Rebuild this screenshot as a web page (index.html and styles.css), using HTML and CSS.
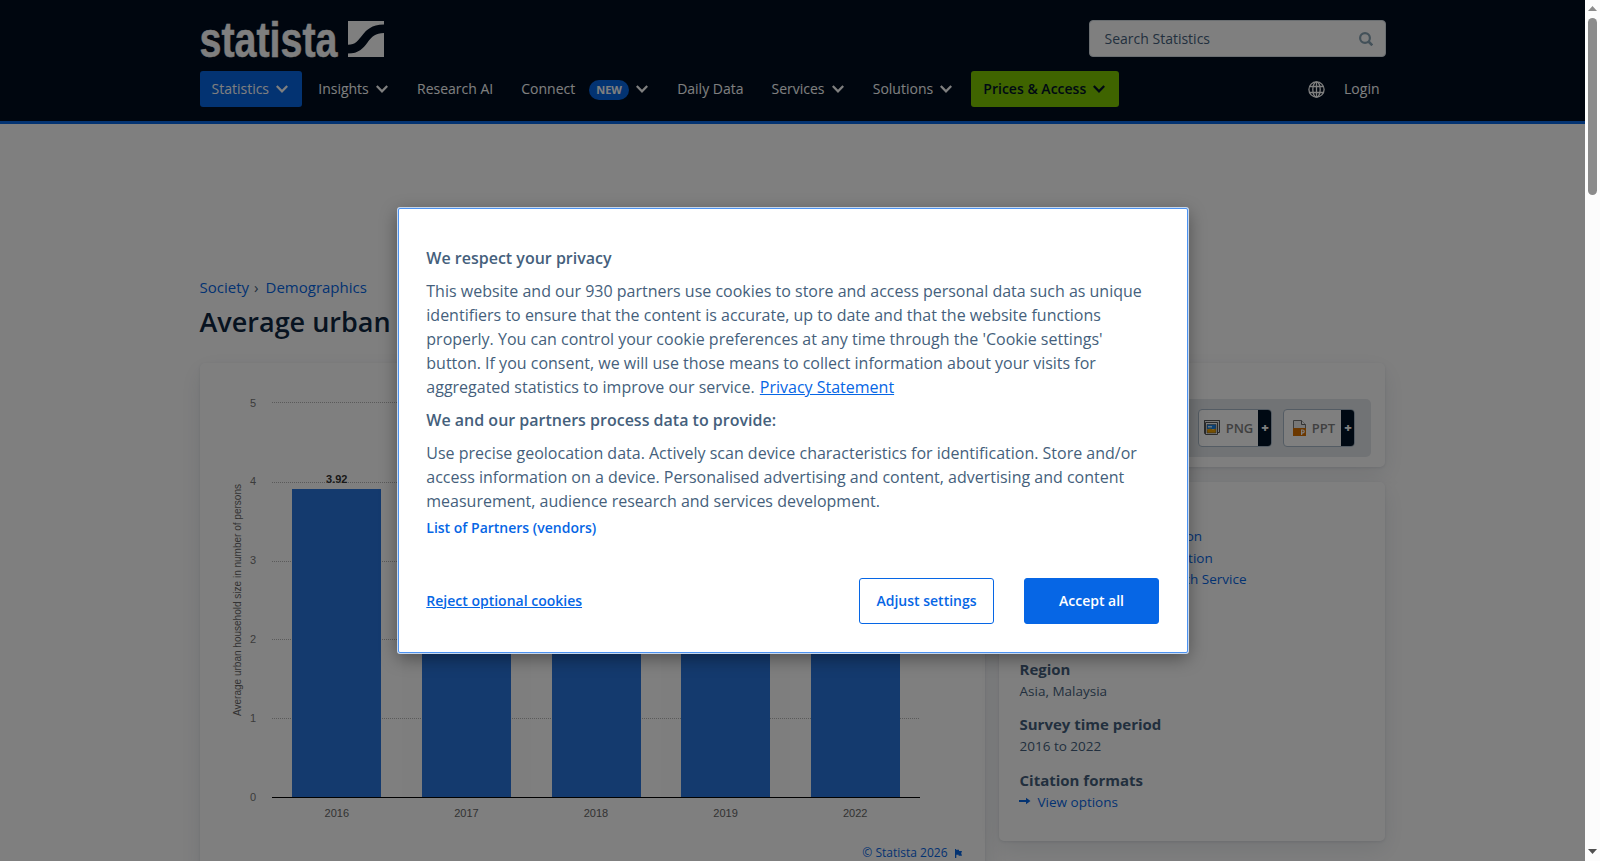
FILE: index.html
```html
<!DOCTYPE html>
<html lang="en">
<head>
<meta charset="utf-8">
<title>Average urban household size in Malaysia | Statista</title>
<link rel="stylesheet" href="styles.css">
</head>
<body>
<svg class="defs" width="0" height="0" aria-hidden="true">
  <symbol id="chev" viewBox="0 0 12 8"><path d="M.8.900 6 6.300 11.200.900" fill="none" stroke="currentColor" stroke-width="2.200"/></symbol>
</svg>
<div class="page">
  <header class="header">
    <div class="header-top">
      <svg class="logo" width="186" height="40" viewBox="0 0 186 40">
        <text class="logo-text" x="-.5" y="36.500" textLength="138" lengthAdjust="spacingAndGlyphs">statista</text>
        <path d="M148 1h36v3.500c-13 .5-17 5-21.500 10.500s-7 9.800-14.500 9.800z" fill="#fff"/>
        <path d="M184 13v24h-36v-3.500c11 0 15-5 19.500-11s8-9.500 16.500-9.500z" fill="#fff"/>
      </svg>
      <div class="search"><span>Search Statistics</span>
        <svg width="14" height="14" viewBox="0 0 14 14"><circle cx="6" cy="6" r="4.900" fill="none" stroke="currentColor" stroke-width="2.200"/><path d="m9.500 9.500 3.800 3.800" stroke="currentColor" stroke-width="2.600"/></svg>
      </div>
    </div>
    <nav class="nav">
      <a class="item active">Statistics<svg class="chev"><use href="#chev"/></svg></a>
      <a class="item">Insights<svg class="chev"><use href="#chev"/></svg></a>
      <a class="item">Research AI</a>
      <a class="item">Connect<span class="pill">NEW</span><svg class="chev"><use href="#chev"/></svg></a>
      <a class="item">Daily Data</a>
      <a class="item">Services<svg class="chev"><use href="#chev"/></svg></a>
      <a class="item">Solutions<svg class="chev"><use href="#chev"/></svg></a>
      <a class="item prices">Prices &amp; Access<svg class="chev"><use href="#chev"/></svg></a>
      <span class="account">
        <svg width="17" height="17" viewBox="0 0 17 17" fill="none" stroke="currentColor" stroke-width="1.300"><circle cx="8.500" cy="8.500" r="7.600"/><ellipse cx="8.500" cy="8.500" rx="3.700" ry="7.600"/><path d="M8.500 1v15M1.800 5.500h13.400M1.800 11.500h13.400"/></svg>
        <a>Login</a>
      </span>
    </nav>
  </header>
  <main class="main">
    <div class="crumbs"><a>Society</a><span>›</span><a>Demographics</a></div>
    <h1>Average urban household size in Malaysia from 2016 to 2022</h1>
    <div class="columns">
      <section class="card chart-card">
        <svg class="chart" width="785" height="470" viewBox="200 363 785 470">
          <g fill="#fcfcfc"><path d="M401.600 403h129.600v394H401.600zM660.800 403h129.600v394H660.800z"/></g>
          <g class="grid"><path d="M272 402.500h648M272 482.500h648M272 561.500h648M272 639.500h648M272 718.500h648"/></g>
          <g fill="#2875dd"><path d="M292 489h89v308h-89zM422 494h89v303h-89zM552 496h89v301h-89zM681 498h89v299h-89zM811 500h89v297h-89z"/></g>
          <path d="M272 797.500h648" stroke="#000"/>
          <g class="ylab"><text x="256" y="407">5</text><text x="256" y="485">4</text><text x="256" y="564">3</text><text x="256" y="643">2</text><text x="256" y="722">1</text><text x="256" y="801">0</text></g>
          <g class="xlab"><text x="336.800" y="817">2016</text><text x="466.400" y="817">2017</text><text x="596" y="817">2018</text><text x="725.600" y="817">2019</text><text x="855.200" y="817">2022</text></g>
          <text class="val" x="336.800" y="483">3.92</text>
          <text class="ytitle" transform="translate(241 600) rotate(-90)" textLength="232">Average urban household size in number of persons</text>
        </svg>
        <div class="copyright">© Statista 2026<svg width="8" height="9" viewBox="0 0 8 9"><path d="M0 0h1v.8h3V2h3L6.200 4.200 7 6.800H3.600v-1H1.300V9H0z" fill="currentColor"/></svg></div>
      </section>
      <aside class="side">
        <section class="card downloads">
          <div class="download-bar">
            <span class="dl doc"><span class="dl-main">PDF</span><b>+</b></span>
            <span class="dl doc"><span class="dl-main">XLS</span><b>+</b></span>
            <span class="dl png"><span class="dl-main">
              <svg width="16" height="16" viewBox="0 0 16 16"><path d="M15.500 11.500V.500H.5v13h1.500" fill="#eee" stroke="#555"/><path d="M.5.500h15v12H.5z" fill="#eee" stroke="#555"/><path d="M1.500 2.500h12v12h-12z" fill="#fff" stroke="#555"/><path d="M3 4.500h9V9H3z" fill="#1683e8"/><path d="M4 6h4v1.500H4z" fill="#cdeaff"/><path d="M3 9.500 6 8.500l3 1 3-1V13H3z" fill="#efa100"/><path d="M3 4.500h9V13H3z" fill="none" stroke="#555" stroke-width=".600"/></svg>PNG</span><b>+</b></span>
            <span class="dl ppt"><span class="dl-main">
              <svg width="13" height="16" viewBox="0 0 13 16"><path d="M.5.500h8l4 4v8H.5z" fill="#eee" stroke="#777"/><path d="M8.500.500v4h4" fill="#fff" stroke="#666"/><path d="M0 8h13v8H0z" fill="#d97000"/><path d="M8.600 15v-5h1.200a1.300 1.300 0 0 1 0 2.800H8.600" fill="none" stroke="#fff" stroke-width="1.200"/></svg>PPT</span><b>+</b></span>
          </div>
        </section>
        <section class="card details">
          <h2>Source</h2>
          <a class="src">Show sources information</a>
          <a class="src">Show publisher information</a>
          <a class="src">Use Ask Statista Research Service</a>
          <h2 class="release">Release date</h2><p>July 2023</p>
          <h2>Region</h2><p>Asia, Malaysia</p>
          <h2>Survey time period</h2><p class="period">2016 to 2022</p>
          <h2>Citation formats</h2>
          <a class="cite"><svg width="12" height="8" viewBox="0 0 12 8"><path d="M0 3h7V.7L11.500 4 7 7.300V5H0z" fill="currentColor"/></svg>View options</a>
        </section>
      </aside>
    </div>
  </main>
  <div class="overlay">
    <div class="modal">
      <h3>We respect your privacy</h3>
      <p>This website and our 930 partners use cookies to store and access personal data such as unique identifiers to ensure that the content is accurate, up to date and that the website functions properly. You can control your cookie preferences at any time through the 'Cookie settings' button. If you consent, we will use those means to collect information about your visits for aggregated statistics to improve our service. <a class="privacy">Privacy Statement</a></p>
      <h3>We and our partners process data to provide:</h3>
      <p>Use precise geolocation data. Actively scan device characteristics for identification. Store and/or access information on a device. Personalised advertising and content, advertising and content measurement, audience research and services development.</p>
      <a class="vendors">List of Partners (vendors)</a>
      <div class="actions">
        <a class="reject">Reject optional cookies</a>
        <button class="btn">Adjust settings</button>
        <button class="btn primary">Accept all</button>
      </div>
    </div>
  </div>
</div>
<div class="scrollbar">
  <svg width="9" height="5" viewBox="0 0 9 5"><path d="M0 5 4.500 0 9 5z" fill="#8b8b8b"/></svg>
  <div class="thumb"></div>
  <svg width="9" height="5" viewBox="0 0 9 5"><path d="M0 0h9L4.500 5z" fill="#505050"/></svg>
</div>
</body>
</html>
```
FILE: styles.css
```css
* { box-sizing: border-box; }
body {
  margin: 0;
  display: flex;
  height: 861px;
  overflow: hidden;
  background: #fff;
  font-family: "Open Sans", "Noto Sans", sans-serif;
  color: #455f7c;
}
.defs { position: absolute; }
h1, h2, h3, p { margin: 0; }
.page { position: relative; width: 1585px; height: 861px; overflow: hidden; }

/* Header */
.header { height: 124px; background: #000d1f; border-bottom: 3px solid #0666e5; padding: 20px 199.500px 0; }
.header-top { display: flex; justify-content: space-between; height: 51px; }
.logo { overflow: visible; }
.logo-text { font: bold 50px "Liberation Sans", Arial, sans-serif; fill: #fff; stroke: #fff; stroke-width: .5px; }
.search {
  display: flex; align-items: center; justify-content: space-between;
  width: 297px; height: 37px; padding: 0 12px 0 15px;
  background: #fff; border: 1px solid #d5dce3; border-radius: 4px;
  font-size: 14px; color: #455f7c;
}
.search svg { color: #87a2b3; }
.nav { display: flex; gap: 4px; height: 36px; color: #fff; font-size: 14px; }
.item { display: flex; align-items: center; padding: 0 12px 2px; border-radius: 3px; white-space: nowrap; }
.item.active { background: #0666e5; padding-right: 13px; }
.item.prices { background: #7fc800; color: #001327; font-weight: 600; margin-left: 2px; padding-right: 13px; }
.chev { width: 12px; height: 8px; margin: 2px 1.200px 0 7px; }
.pill {
  display: flex; align-items: center; height: 20px; padding: 0 7px; margin: 3px 0 0 14px;
  background: #0666e5; border-radius: 10px; font-size: 11px; font-weight: 700;
}
.account { display: flex; align-items: center; gap: 19px; margin-left: auto; padding: 0 6px 2px 0; }
.account svg { margin-top: 2px; }

/* Content */
.main { padding: 150px 199.500px 0; }
.crumbs { display: flex; height: 25px; align-items: center; font-size: 15px; }
.crumbs span { margin: 0 7px 0 5px; }
.crumbs a, .src, .cite { color: #0666e5; }
h1 { margin-top: 4px; height: 60px; font-size: 27px; line-height: 38px; font-weight: 600; color: #0f2741; white-space: nowrap; }
.columns { display: flex; gap: 14px; }
.card { background: #fff; border-radius: 5px; box-shadow: 0 1px 3px rgba(15, 39, 65, .1), 0 8px 24px rgba(15, 39, 65, .1); }
.chart-card { width: 785px; height: 510px; }
.chart { display: block; font-family: "Liberation Sans", Arial, sans-serif; font-size: 11px; }
.grid path { stroke: #b4b4b4; stroke-dasharray: 1 1; }
.ylab { text-anchor: end; fill: #777; }
.xlab { text-anchor: middle; fill: #666; }
.val { text-anchor: middle; font-weight: bold; fill: #333; }
.ytitle { text-anchor: middle; font-size: 10px; fill: #666; }
.copyright { display: flex; justify-content: flex-end; align-items: center; gap: 7px; margin: 11px 22px 0 0; font-size: 12px; line-height: 18px; color: #0666e5; }
.side { width: 386px; }
.downloads { height: 104px; padding: 36px 14px 0; }
.download-bar { display: flex; justify-content: flex-end; height: 58px; padding: 10px 16px; background: #e3e7eb; border-radius: 5px; }
.dl { display: flex; flex: none; width: 74px; height: 38px; margin-left: 11px; border: 1px solid #a8b8c8; border-radius: 4px; overflow: hidden; font-size: 13px; font-weight: 600; color: #808080; background: #fff; }
.dl.ppt { width: 72px; }
.dl.doc { width: 66px; }
.dl-main { flex: 1; display: flex; align-items: center; justify-content: center; gap: 6px; }
.png .dl-main { padding-left: 1px; }
.ppt .dl-main { padding-left: 4px; }
.dl b { display: flex; align-items: center; justify-content: center; width: 13px; padding: 0 0 2px 2px; background: #001327; color: #fff; }
.details { height: 359px; margin-top: 15px; padding: 24px 21px 0; font-size: 13.500px; }
.details h2 { font-size: 15px; line-height: 20px; font-weight: 700; }
.details p { line-height: 20px; margin: 2px 0 13px; }
.details .period { margin-bottom: 14px; }
.src { display: block; padding-left: 18px; line-height: 21.500px; }
.details .release { margin-top: 13px; }
.cite { display: flex; align-items: center; gap: 7px; line-height: 20px; margin: 2px 0 0 -1px; }
.cite svg { margin-top: -2px; }

/* Privacy dialog */
.overlay { position: absolute; inset: 0; background: rgba(0, 0, 0, .5); padding: 208px 0 0 398px; }
.modal {
  width: 790px; height: 445px; padding: 37px 28px 0 27.300px;
  background: #fff; border: 1px solid #4c92f0; border-radius: 2px;
  box-shadow: 0 0 0 1px #c6d7ed, 0 5px 18px rgba(0, 0, 0, .4);
  font-size: 16px; line-height: 24px;
}
.modal h3 { font-size: 16px; line-height: 24px; font-weight: 600; }
.modal p { margin: 9px 0; }
.vendors, .reject { color: #0666e5; font-size: 14px; font-weight: 600; }
.privacy, .reject { color: #0666e5; text-decoration: underline; }
.privacy { margin-left: 1px; }
.vendors { display: block; margin-top: -6px; }
.actions { display: flex; align-items: center; gap: 30px; margin-top: 38px; }
.reject { margin-right: auto; }
.btn { width: 135px; height: 46px; padding: 0 0 2px; background: #fff; border: 1px solid #0666e5; border-radius: 3px; font: 600 14px "Open Sans", sans-serif; color: #0666e5; }
.btn.primary { background: #0666e5; color: #fff; }

/* Window scrollbar */
.scrollbar { display: flex; flex-direction: column; align-items: center; width: 15px; padding: 6px 0 7px; background: #fcfcfc; }
.thumb { width: 9px; height: 177px; margin: 7px 0 auto; border-radius: 5px; background: #8b8b8b; }
```
